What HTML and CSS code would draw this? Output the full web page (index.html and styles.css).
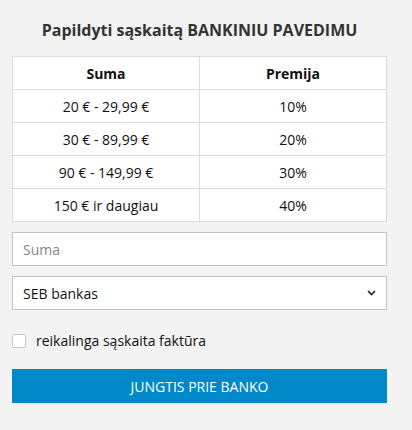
FILE: index.html
```html
<!DOCTYPE html>
<html lang="lt">
<head>
  <meta charset="UTF-8" />
  <meta name="viewport" content="width=device-width, initial-scale=1.0" />
  <title>Papildyti sąskaitą</title>
  <link rel="stylesheet" href="styles.css">
</head>
<body>
<div class="topup">
  <h2>Papildyti sąskaitą BANKINIU PAVEDIMU</h2>
  <table class="bonus-table">
    <tr><th>Suma</th><th>Premija</th></tr>
    <tr><td>20 € - 29,99 €</td><td>10%</td></tr>
    <tr><td>30 € - 89,99 €</td><td>20%</td></tr>
    <tr><td>90 € - 149,99 €</td><td>30%</td></tr>
    <tr><td>150 € ir daugiau</td><td>40%</td></tr>
  </table>
  <input type="text" class="field" placeholder="Suma">
  <div class="select-wrap">
    <select class="field">
      <option>SEB bankas</option>
      <option>Swedbank</option>
      <option>Luminor</option>
    </select>
    <svg class="chevron" width="9" height="6" viewBox="0 0 9 6"><path d="M1 1l3.5 3.5L8 1" fill="none" stroke="#222" stroke-width="1.6"/></svg>
  </div>
  <label class="invoice">
    <input type="checkbox">
    <span class="box"></span>
    reikalinga sąskaita faktūra
  </label>
  <button class="bank-btn">JUNGTIS PRIE BANKO</button>
</div>
</body>
</html>
```

FILE: styles.css
```css
body {
  margin: 0;
  background: #f3f3f3;
  font-family: 'Open Sans', 'Liberation Sans', sans-serif;
  color: #222;
}
.topup {
  width: 375px;
  margin: 0 0 0 12px;
  padding-top: 18px;
}
h2 {
  margin: 0 0 14px;
  text-align: center;
  font-size: 16px;
  font-weight: 700;
  line-height: 24px;
  color: #333;
}
.bonus-table {
  width: 100%;
  border-collapse: collapse;
  background: #fff;
  table-layout: fixed;
  margin-bottom: 10px;
}
.bonus-table th, .bonus-table td {
  border: 1px solid #dcdcdc;
  height: 32px;
  padding: 0;
  text-align: center;
  font-size: 14px;
  color: #111;
}
.bonus-table th {
  font-weight: 700;
}
.field {
  display: block;
  box-sizing: border-box;
  width: 100%;
  height: 34px;
  margin: 0;
  padding: 0 10px;
  border: 1px solid #c2c2c2;
  border-radius: 0;
  background: #fff;
  font-family: inherit;
  font-size: 14px;
  color: #111;
  outline: none;
}
.field::placeholder {
  color: #888;
}
.select-wrap {
  position: relative;
  margin-top: 10px;
}
select.field {
  appearance: none;
  -webkit-appearance: none;
}
.chevron {
  position: absolute;
  right: 11px;
  top: 14px;
  pointer-events: none;
}
.invoice {
  display: flex;
  align-items: center;
  margin-top: 23px;
  font-size: 14px;
  color: #111;
  line-height: 16px;
}
.invoice input {
  display: none;
}
.invoice .box {
  width: 12px;
  height: 12px;
  border: 1px solid #c4c4c4;
  border-radius: 2px;
  background: #fff;
  margin-right: 10px;
}
.bank-btn {
  display: block;
  width: 100%;
  height: 34px;
  margin-top: 20px;
  border: none;
  background: #0089c9;
  color: #fff;
  font-family: inherit;
  font-size: 14px;
  cursor: pointer;
}
```
